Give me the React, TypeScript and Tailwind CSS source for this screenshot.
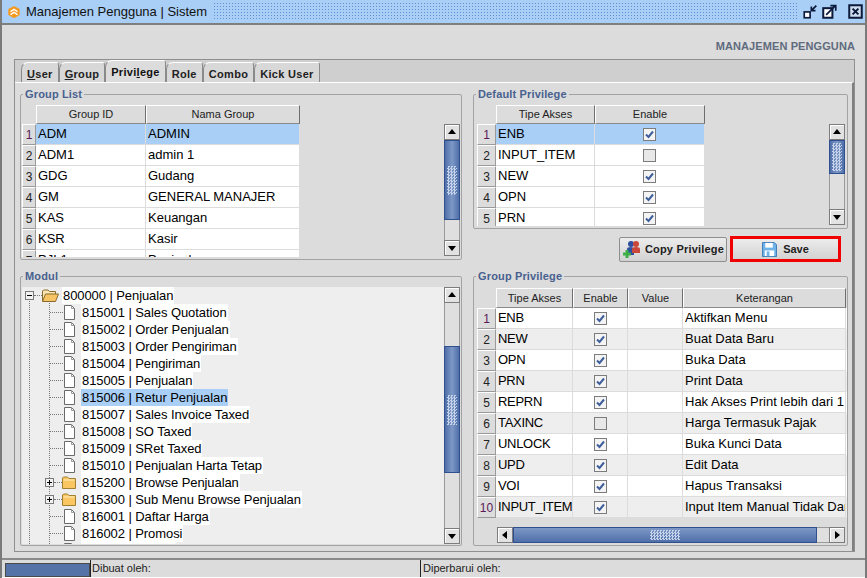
import type { ReactNode } from 'react';

const groups = [
  ['ADM', 'ADMIN'],
  ['ADM1', 'admin 1'],
  ['GDG', 'Gudang'],
  ['GM', 'GENERAL MANAJER'],
  ['KAS', 'Keuangan'],
  ['KSR', 'Kasir'],
  ['PJL1', 'Penjualan'],
];

const defaults: [string, boolean][] = [
  ['ENB', true],
  ['INPUT_ITEM', false],
  ['NEW', true],
  ['OPN', true],
  ['PRN', true],
];

const privileges: [string, boolean, string][] = [
  ['ENB', true, 'Aktifkan Menu'],
  ['NEW', true, 'Buat Data Baru'],
  ['OPN', true, 'Buka Data'],
  ['PRN', true, 'Print Data'],
  ['REPRN', true, 'Hak Akses Print lebih dari 1'],
  ['TAXINC', false, 'Harga Termasuk Pajak'],
  ['UNLOCK', true, 'Buka Kunci Data'],
  ['UPD', true, 'Edit Data'],
  ['VOI', true, 'Hapus Transaksi'],
  ['INPUT_ITEM', true, 'Input Item Manual Tidak Dari'],
];

const modules = [
  { label: '815001 | Sales Quotation' },
  { label: '815002 | Order Penjualan' },
  { label: '815003 | Order Pengiriman' },
  { label: '815004 | Pengiriman' },
  { label: '815005 | Penjualan' },
  { label: '815006 | Retur Penjualan', selected: true },
  { label: '815007 | Sales Invoice Taxed' },
  { label: '815008 | SO Taxed' },
  { label: '815009 | SRet Taxed' },
  { label: '815010 | Penjualan Harta Tetap' },
  { label: '815200 | Browse Penjualan', folder: true },
  { label: '815300 | Sub Menu Browse Penjualan', folder: true },
  { label: '816001 | Daftar Harga' },
  { label: '816002 | Promosi' },
  { label: '816003 | Diskon' },
];

function Group({ title, className, children }: { title: string; className: string; children: ReactNode }) {
  return (
    <fieldset className={`border border-[#a3a3a3] rounded-[2px] ${className}`}>
      <legend className="ml-[2px] px-[2px] text-[11px] leading-[11px] font-bold text-[#48618f] tracking-[0.15px]">{title}</legend>
      {children}
    </fieldset>
  );
}

function HeadCell({ width, children }: { width: string; children?: ReactNode }) {
  return (
    <div className={`${width} h-full shrink-0 flex items-center justify-center border-t border-l border-t-white border-l-white border-r border-r-[#6f6f6f] border-b border-b-[#8a8a8a] text-[11px] text-[#222]`}>
      {children}
    </div>
  );
}

function RowNum({ n, width }: { n: number; width: string }) {
  return (
    <div className={`${width} h-full shrink-0 flex items-center justify-center bg-[#dcdcdc] border-t border-l border-white border-r border-r-[#9a9a9a] border-b border-b-[#9a9a9a] text-[12px] ${n === 1 || n === 10 ? 'text-[#5a1a5a]' : 'text-[#222]'}`}>
      {n}
    </div>
  );
}

function Cell({ width, children, center, tight }: { width: string; children?: ReactNode; center?: boolean; tight?: boolean }) {
  return (
    <div className={`${width} h-full shrink-0 flex items-center overflow-hidden whitespace-nowrap border-r border-b border-[#dcdcdc] text-[13px] text-black ${center ? 'justify-center' : 'pl-[2px]'} ${tight ? 'tracking-[-0.3px]' : ''}`}>
      {children}
    </div>
  );
}

function Check({ on }: { on: boolean }) {
  return (
    <span className={`w-[13px] h-[13px] border border-[#7c7c7c] flex items-center justify-center ${on ? 'bg-[#f4f4f4]' : 'bg-[#e8e8e8]'}`}>
      {on && (
        <svg width="9" height="9" viewBox="0 0 9 9">
          <path d="M1 4.5 L3.5 7 L8 1.5" fill="none" stroke="#3e5e9c" strokeWidth="2" />
        </svg>
      )}
    </span>
  );
}

function Arrow({ dir }: { dir: 'up' | 'down' | 'left' | 'right' }) {
  const shape = {
    up: 'M1 7 L5 2 L9 7 Z',
    down: 'M1 3 L9 3 L5 8 Z',
    left: 'M7 1 L7 9 L2 5 Z',
    right: 'M3 1 L3 9 L8 5 Z',
  }[dir];
  return (
    <svg width="10" height="10" viewBox="0 0 10 10">
      <path d={shape} fill="#000" />
    </svg>
  );
}

function ScrollBtn({ dir }: { dir: 'up' | 'down' | 'left' | 'right' }) {
  return (
    <div className="w-[16px] h-[16px] shrink-0 flex items-center justify-center bg-[#e2e2e2] border border-[#7c7c7c] shadow-[inset_1px_1px_0_#fff]">
      <Arrow dir={dir} />
    </div>
  );
}

function VScroll({ height, top, thumb, dots }: { height: string; top: string; thumb: string; dots: string }) {
  return (
    <div className={`w-[16px] ${height} shrink-0 flex flex-col`}>
      <ScrollBtn dir="up" />
      <div className={`${top} shrink-0 border-x border-[#9a9a9a] bg-[#dfdfdf]`} />
      <div className={`${thumb} shrink-0 flex items-center justify-center border border-[#2f4f8f] bg-[linear-gradient(90deg,#4f6fa9,#7e98c6,#4f6fa9)]`}>
        <div className={`w-[10px] ${dots} bg-[repeating-conic-gradient(#c5d3ea_0_25%,transparent_0_50%)] bg-[length:3px_3px]`} />
      </div>
      <div className="flex-1 border-x border-[#9a9a9a] bg-[#dfdfdf]" />
      <ScrollBtn dir="down" />
    </div>
  );
}

function FileIcon() {
  return (
    <svg width="13" height="15" viewBox="0 0 13 15" className="shrink-0">
      <path d="M1.5 .5 H8.5 L11.5 3.5 V14.5 H1.5 Z" fill="#fff" stroke="#6a6a6a" />
      <path d="M8.5 .5 V3.5 H11.5" fill="none" stroke="#9a9a9a" />
    </svg>
  );
}

function FolderIcon({ open }: { open?: boolean }) {
  return open ? (
    <svg width="17" height="13" viewBox="0 0 17 13" className="shrink-0">
      <path d="M.5 12 V2 L1.5 1 H6 L7.5 2.5 H13.5 V5" fill="#f9e6b4" stroke="#8a6a2a" />
      <path d="M.5 12.5 L3.5 5 H16.5 L13.5 12.5 Z" fill="#f7c465" stroke="#8a6a2a" />
    </svg>
  ) : (
    <svg width="14" height="13" viewBox="0 0 14 13" className="shrink-0">
      <path d="M.5 12.5 V2 L1.5 1 H5.5 L7 2.5 H13.5 V12.5 Z" fill="#f9c661" stroke="#a08030" />
      <path d="M1.5 4 H12.5" stroke="#fdf0c8" />
    </svg>
  );
}

function Toggle({ open }: { open?: boolean }) {
  return (
    <svg width="9" height="9" viewBox="0 0 9 9" className="shrink-0">
      <rect x=".5" y=".5" width="8" height="8" fill="#f2f2f2" stroke="#7a7a7a" />
      <path d="M2 4.5 H7" stroke="#000" />
      {!open && <path d="M4.5 2 V7" stroke="#000" />}
    </svg>
  );
}

function TitleButton({ kind }: { kind: 'min' | 'max' | 'close' }) {
  return (
    <svg width="15" height="15" viewBox="0 0 18 18">
      {kind === 'min' && (
        <>
          <rect x="1.5" y="9.5" width="7" height="7" fill="#fff" stroke="#0b1a3a" strokeWidth="2" />
          <path d="M16 2 L10 8 M10 3 V8 H15" fill="none" stroke="#0b1a3a" strokeWidth="2" />
        </>
      )}
      {kind === 'max' && (
        <>
          <rect x="1.5" y="5" width="11" height="11.5" fill="#fff" stroke="#0b1a3a" strokeWidth="2.4" />
          <path d="M5 13 L16 2 M10 2 H16.5 V8" fill="none" stroke="#0b1a3a" strokeWidth="2" />
        </>
      )}
      {kind === 'close' && (
        <>
          <rect x="1.5" y="1.5" width="15" height="15" fill="#cfdcf0" stroke="#0b1a3a" strokeWidth="2.4" />
          <path d="M5.5 5.5 L12.5 12.5 M12.5 5.5 L5.5 12.5" stroke="#0b1a3a" strokeWidth="2.4" />
        </>
      )}
    </svg>
  );
}

const tabs = ['User', 'Group', 'Privilege', 'Role', 'Combo', 'Kick User'];

export default function App() {
  return (
    <div className="w-[867px] h-[578px] flex flex-col bg-[#dcdcdc] border-x-2 border-[#7a7a7a] overflow-hidden font-['Liberation_Sans',sans-serif]">
      {/* title bar */}
      <div className="h-[25px] shrink-0 flex items-center bg-[#a9cff7] border-b-2 border-[#7f7f7f]">
        <svg width="14" height="14" viewBox="0 0 16 16" className="ml-[5px] shrink-0">
          <path d="M8 1 L14.5 4.5 V11.5 L8 15 L1.5 11.5 V4.5 Z" fill="#f39a1e" />
          <path d="M4 7.5 L8 5 L12 7.5 M4 11 L8 8.5 L12 11" fill="none" stroke="#fff" strokeWidth="1.6" />
        </svg>
        <span className="ml-[5px] text-[13px] text-[#111] whitespace-nowrap">Manajemen Pengguna | Sistem</span>
        <div className="ml-[6px] flex-1 h-[19px] bg-[radial-gradient(#5f8fd0_1px,transparent_1px)] bg-[length:3px_3px]" />
        <div className="flex items-center gap-[4px] ml-[6px] mr-[2px]">
          <TitleButton kind="min" />
          <TitleButton kind="max" />
          <div className="ml-[7px]"><TitleButton kind="close" /></div>
        </div>
      </div>

      {/* page heading */}
      <div className="h-[34px] shrink-0 flex items-center justify-end pr-[10px] pt-[8px] text-[11px] font-bold text-[#5f6b7e] tracking-[0.1px]">
        MANAJEMEN PENGGUNA
      </div>

      {/* tab frame */}
      <div className="ml-[12px] mr-[10px] h-[493px] shrink-0 flex flex-col border border-[#8f8f8f] bg-[#cfcfcf]">
        <div className="h-[22px] shrink-0 flex items-end pl-[6px]">
          {tabs.map((t) => (
            <div
              key={t}
              className={`flex items-center px-[5px] rounded-tl-[7px] rounded-tr-[3px] border-t border-x border-t-white border-x-[#8a8a8a] text-[11px] font-bold tracking-[0.3px] ${t === 'Privilege' ? 'h-[22px] pt-[2px] bg-[#dcdcdc] text-[#111]' : 'h-[20px] pt-[3px] bg-[#d8d8d8] text-[#222]'}`}
            >
              {t === 'User' ? <span><u>U</u>ser</span> : t === 'Group' ? <span><u>G</u>roup</span> : t === 'Privilege' ? <span>Privi<u>l</u>ege</span> : t}
            </div>
          ))}
        </div>

        <div className="flex-1 bg-[#dcdcdc] border-t border-white border-r-2 border-r-[#7f7f7f] grid grid-cols-[442px_375px] grid-rows-[188px_1fr] gap-x-[11px] pl-[5px]">
          {/* group list */}
          <Group title="Group List" className="h-[171px] mt-[6px]">
            <div className="flex pl-[1px] pt-[5px]">
              <div className="w-[422px] h-[152px] overflow-hidden">
                <div className="h-[19px] flex pl-[14px]">
                  <HeadCell width="w-[110px]">Group ID</HeadCell>
                  <HeadCell width="w-[154px]">Nama Group</HeadCell>
                </div>
                {groups.map(([id, name], i) => (
                  <div key={id} className={`h-[21px] flex w-[278px] ${i === 0 ? 'bg-[#a9cff7]' : 'bg-white'}`}>
                    <RowNum n={i + 1} width="w-[14px]" />
                    <Cell width="w-[110px]">{id}</Cell>
                    <Cell width="w-[154px]">{name}</Cell>
                  </div>
                ))}
              </div>
              <div className="pt-[19px]">
                <VScroll height="h-[132px]" top="h-0" thumb="h-[80px]" dots="h-[29px]" />
              </div>
            </div>
          </Group>

          {/* default privilege + buttons */}
          <div className="mt-[6px]">
            <Group title="Default Privilege" className="h-[140px]">
              <div className="flex pl-[3px] pt-[5px]">
                <div className="w-[352px] h-[121px] overflow-hidden">
                  <div className="h-[19px] flex pl-[19px]">
                    <HeadCell width="w-[99px]">Tipe Akses</HeadCell>
                    <HeadCell width="w-[110px]">Enable</HeadCell>
                  </div>
                  {defaults.map(([code, on], i) => (
                    <div key={code} className={`h-[21px] flex w-[228px] ${i === 0 ? 'bg-[#a9cff7]' : 'bg-white'}`}>
                      <RowNum n={i + 1} width="w-[19px]" />
                      <Cell width="w-[99px]">{code}</Cell>
                      <Cell width="w-[110px]" center><Check on={on} /></Cell>
                    </div>
                  ))}
                </div>
                <div className="pt-[19px]">
                  <VScroll height="h-[101px]" top="h-0" thumb="h-[34px]" dots="h-[28px]" />
                </div>
              </div>
            </Group>
            <div className="flex justify-end items-center gap-[3px] mt-[7px] pr-[7px]">
              <button className="w-[108px] h-[25px] flex items-center justify-center gap-[3px] rounded-[2px] border border-[#8f8f8f] bg-[linear-gradient(180deg,#ececec,#d2d2d2)] text-[11px] font-bold text-[#222] tracking-[0.2px]">
                <svg width="20" height="20" viewBox="0 0 20 20">
                  <circle cx="9" cy="5" r="3" fill="#2f4fa0" />
                  <path d="M5 16 V10 Q5 8 9 8 Q11 8 12 10 V16 Z" fill="#2f4fa0" />
                  <circle cx="14" cy="5" r="3" fill="#c9483a" />
                  <path d="M10 14 V10 Q10 8 14 8 Q18 8 18 10 V14 Z" fill="#c9483a" />
                  <path d="M5 11 V19 M1 15 H9" stroke="#3fae49" strokeWidth="3" />
                </svg>
                Copy Privilege
              </button>
              <button className="w-[111px] h-[26px] flex items-center justify-center gap-[6px] border-[3px] border-[#f00000] bg-[linear-gradient(180deg,#ececec,#d2d2d2)] text-[11px] font-bold text-[#222]">
                <svg width="15" height="15" viewBox="0 0 16 16">
                  <path d="M.5 .5 H13 L15.5 3 V15.5 H.5 Z" fill="#6fb3e8" stroke="#3a7ab5" />
                  <rect x="3.5" y="1" width="8" height="5" fill="#fff" />
                  <rect x="3" y="9" width="10" height="6" fill="#fff" />
                  <rect x="5" y="10" width="3" height="5" fill="#6fb3e8" />
                </svg>
                Save
              </button>
            </div>
          </div>

          {/* modul tree */}
          <Group title="Modul" className="h-[275px]">
            <div className="flex pl-[1px] pt-[5px]">
              <div className="relative w-[422px] h-[257px] overflow-hidden bg-[#eeeeee]">
                <div className="absolute left-[7px] top-[14px] bottom-0 border-l border-dotted border-[#777]" />
                <div className="absolute left-[27px] top-[16px] bottom-0 border-l border-dotted border-[#777]" />
                <div className="relative h-[17px] flex items-center pl-[3px]">
                  <Toggle open />
                  <div className="w-[8px] border-t border-dotted border-[#777]" />
                  <FolderIcon open />
                  <span className="ml-[3px] px-[1px] bg-white text-[13px] leading-[17px] tracking-[-0.08px] text-black whitespace-nowrap">800000 | Penjualan</span>
                </div>
                {modules.map((m) => (
                  <div key={m.label} className="relative h-[17px] flex items-center">
                    {m.folder ? (
                      <>
                        <div className="ml-[23px]"><Toggle /></div>
                        <div className="w-[8px] border-t border-dotted border-[#777]" />
                        <FolderIcon />
                      </>
                    ) : (
                      <>
                        <div className="ml-[28px] w-[13px] border-t border-dotted border-[#777]" />
                        <FileIcon />
                      </>
                    )}
                    <span className={`ml-[5px] px-[1px] text-[13px] leading-[17px] tracking-[-0.08px] text-black whitespace-nowrap ${m.selected ? 'bg-[#a9cff7]' : 'bg-white'}`}>{m.label}</span>
                  </div>
                ))}
              </div>
              <VScroll height="h-[257px]" top="h-[43px]" thumb="h-[127px]" dots="h-[30px]" />
            </div>
          </Group>

          {/* group privilege */}
          <Group title="Group Privilege" className="h-[275px]">
            <div className="pl-[3px] pt-[6px]">
              <div className="w-[370px] h-[230px] overflow-hidden">
                <div className="h-[20px] flex pl-[19px]">
                  <HeadCell width="w-[77px]">Tipe Akses</HeadCell>
                  <HeadCell width="w-[55px]">Enable</HeadCell>
                  <HeadCell width="w-[55px]">Value</HeadCell>
                  <HeadCell width="w-[163px]">Keterangan</HeadCell>
                </div>
                {privileges.map(([code, on, desc], i) => (
                  <div key={code} className={`h-[21px] flex ${i % 2 === 1 ? 'bg-[#eeeeee]' : 'bg-white'}`}>
                    <RowNum n={i + 1} width="w-[19px]" />
                    <Cell width="w-[77px]" tight>{code}</Cell>
                    <Cell width="w-[55px]" center><Check on={on} /></Cell>
                    <Cell width="w-[55px]" />
                    <Cell width="w-[163px]">{desc}</Cell>
                  </div>
                ))}
              </div>
              <div className="flex items-center ml-[20px] mt-[9px] w-[348px] h-[16px]">
                <ScrollBtn dir="left" />
                <div className="flex-1 h-full flex items-center justify-center border border-[#2f4f8f] bg-[linear-gradient(180deg,#7e98c6,#4f6fa9)]">
                  <div className="w-[30px] h-[10px] bg-[repeating-conic-gradient(#c5d3ea_0_25%,transparent_0_50%)] bg-[length:3px_3px]" />
                </div>
                <div className="w-[12px] h-full shrink-0 border-y border-[#9a9a9a] bg-[#dfdfdf]" />
                <ScrollBtn dir="right" />
              </div>
            </div>
          </Group>
        </div>
      </div>

      {/* status bar */}
      <div className="mt-[6px] mb-[2px] flex-1 flex items-stretch border-t-2 border-t-[#8a8a8a] border-b border-b-white text-[11px] text-[#222]">
        <div className="w-[85px] ml-[3px] mt-[3px] bg-[#5673a8] border border-[#4a4a4a]" />
        <div className="w-[331px] flex items-center pl-[1px] border-r border-[#222] border-l border-l-[#222] bg-[#dcdcdc]">Dibuat oleh:</div>
        <div className="flex-1 flex items-center pl-[2px] bg-[#dcdcdc]">Diperbarui oleh:</div>
      </div>
    </div>
  );
}
